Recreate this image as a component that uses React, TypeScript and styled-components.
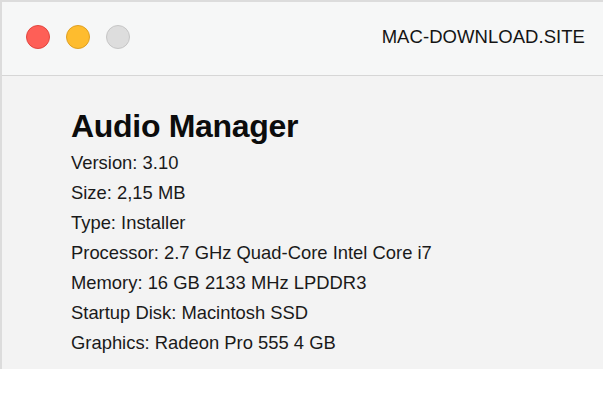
import React from "react";
import styled, { createGlobalStyle } from "styled-components";

const Global = createGlobalStyle`
  html, body {
    margin: 0;
    padding: 0;
    background: #ffffff;
  }
  body {
    font-family: "Liberation Sans", Arial, Helvetica, sans-serif;
  }
`;

const Window = styled.div`
  box-sizing: border-box;
  height: 369px;
  border-top: 2px solid #dcdcdc;
  border-left: 2px solid #dcdcdc;
  background: #f3f3f3;
  display: flex;
  flex-direction: column;
`;

const TitleBar = styled.header`
  box-sizing: border-box;
  height: 74px;
  padding: 0 18px 3px 24px;
  background: #f6f7f7;
  border-bottom: 1px solid #d6d6d6;
  display: flex;
  align-items: center;
  justify-content: space-between;
`;

const Lights = styled.div`
  display: flex;
  gap: 16px;
`;

const Light = styled.span<{ $fill: string; $edge: string }>`
  box-sizing: border-box;
  width: 24px;
  height: 24px;
  border-radius: 50%;
  background: ${(p) => p.$fill};
  border: 1px solid ${(p) => p.$edge};
`;

const Site = styled.div`
  font-size: 18.5px;
  color: #141414;
  letter-spacing: 0.05px;
`;

const Content = styled.main`
  padding: 30px 0 0 69px;
  display: flex;
  flex-direction: column;
`;

const AppName = styled.h1`
  margin: 0;
  font-size: 32px;
  line-height: 40px;
  font-weight: 700;
  letter-spacing: -0.3px;
  color: #0c0c0c;
`;

const Specs = styled.ul`
  list-style: none;
  margin: 2px 0 0;
  padding: 0;
`;

const Spec = styled.li`
  font-size: 18.4px;
  line-height: 30px;
  color: #1a1a1a;
`;

const specs = [
  "Version: 3.10",
  "Size: 2,15 MB",
  "Type: Installer",
  "Processor: 2.7 GHz Quad-Core Intel Core i7",
  "Memory: 16 GB 2133 MHz LPDDR3",
  "Startup Disk: Macintosh SSD",
  "Graphics: Radeon Pro 555 4 GB",
];

export default function App() {
  return (
    <>
      <Global />
      <Window>
        <TitleBar>
          <Lights>
            <Light $fill="#fe5f57" $edge="#e2463f" />
            <Light $fill="#febc2e" $edge="#dfa023" />
            <Light $fill="#dddddd" $edge="#c6c6c6" />
          </Lights>
          <Site>MAC-DOWNLOAD.SITE</Site>
        </TitleBar>
        <Content>
          <AppName>Audio Manager</AppName>
          <Specs>
            {specs.map((s) => (
              <Spec key={s}>{s}</Spec>
            ))}
          </Specs>
        </Content>
      </Window>
    </>
  );
}
